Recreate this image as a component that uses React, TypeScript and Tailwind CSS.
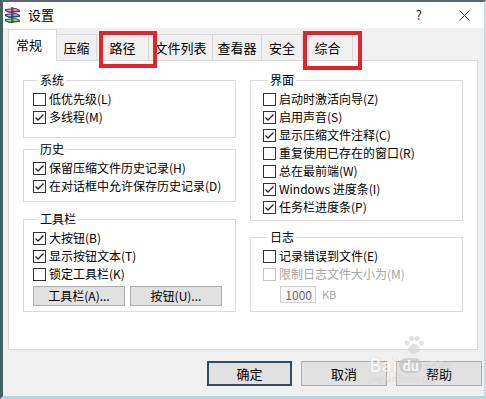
import React from "react";

type Row = { label: string; checked?: boolean; disabled?: boolean };

const systemRows: Row[] = [
  { label: "低优先级(L)" },
  { label: "多线程(M)", checked: true },
];

const historyRows: Row[] = [
  { label: "保留压缩文件历史记录(H)", checked: true },
  { label: "在对话框中允许保存历史记录(D)", checked: true },
];

const toolbarRows: Row[] = [
  { label: "大按钮(B)", checked: true },
  { label: "显示按钮文本(T)", checked: true },
  { label: "锁定工具栏(K)" },
];

const uiRows: Row[] = [
  { label: "启动时激活向导(Z)" },
  { label: "启用声音(S)", checked: true },
  { label: "显示压缩文件注释(C)", checked: true },
  { label: "重复使用已存在的窗口(R)" },
  { label: "总在最前端(W)" },
  { label: "Windows 进度条(I)", checked: true },
  { label: "任务栏进度条(P)", checked: true },
];

const tabs = [
  { label: "压缩", w: "w-[40px]" },
  { label: "路径", w: "w-[52px]" },
  { label: "文件列表", w: "w-[64px]" },
  { label: "查看器", w: "w-[49px]" },
  { label: "安全", w: "w-[41px]" },
  { label: "综合", w: "w-[50px]" },
];

function CheckRow({ label, checked, disabled }: Row) {
  return (
    <div className="flex items-center h-[18px] gap-[3px]">
      <span
        className={`w-[13px] h-[13px] shrink-0 border bg-white flex items-center justify-center ${
          disabled ? "border-[#c4c4c4]" : "border-[#333]"
        }`}
      >
        {checked && (
          <svg width="11" height="11" viewBox="0 0 11 11">
            <polyline points="1.5,5.5 4,8 9.5,2.5" fill="none" stroke="#222" strokeWidth="1.3" />
          </svg>
        )}
      </span>
      <span className={`whitespace-nowrap ${disabled ? "text-[#a6a6a6]" : "text-black"}`}>{label}</span>
    </div>
  );
}

function Group({
  title,
  className,
  children,
}: {
  title: string;
  className: string;
  children: React.ReactNode;
}) {
  return (
    <fieldset className={`border border-[#dcdcdc] w-[213px] ${className}`}>
      <legend className="ml-[5px] px-[2px] leading-[14px]">{title}</legend>
      {children}
    </fieldset>
  );
}

// winrar-style stack of books
function WinRarIcon() {
  return (
    <svg width="17" height="16" viewBox="0 0 17 16">
      <path d="M1 2 L12 1 L16 3 L16 5 L5 6 L1 4 Z" fill="#8a2466" />
      <path d="M2 3 L12 2 L15 3.5 L5 4.5 Z" fill="#e2a3c8" />
      <path d="M1 7 L12 6 L16 8 L16 10 L5 11 L1 9 Z" fill="#27407e" />
      <path d="M2 8 L12 7 L15 8.5 L5 9.5 Z" fill="#9db4e2" />
      <path d="M1 12 L12 11 L16 13 L16 15 L5 16 L1 14 Z" fill="#2b6b3a" />
      <path d="M2 13 L12 12 L15 13.5 L5 14.5 Z" fill="#9fd6a8" />
      <rect x="7" y="0" width="2.5" height="16" fill="#3a3a3a" opacity="0.7" />
    </svg>
  );
}

export default function App() {
  return (
    <div className="relative w-[486px] h-[399px] bg-[#f0f0f0] border-t-2 border-t-[#5b6670] border-l-[3px] border-l-[#44625f] border-r-2 border-r-[#c5dce0] border-b-[3px] border-b-[#b9d4d9] flex flex-col text-[12px] text-black font-['Noto_Sans_CJK_SC','Noto_Sans',sans-serif] overflow-hidden">
      {/* title bar */}
      <div className="h-[26px] bg-white flex items-center pl-[1px] pr-[14px] shrink-0">
        <WinRarIcon />
        <span className="ml-[7px] text-[13px]">设置</span>
        <span className="ml-auto text-[13px] text-[#222]">?</span>
        <svg className="ml-[37px]" width="11" height="11" viewBox="0 0 11 11">
          <path d="M0.5 0.5 L10.5 10.5 M10.5 0.5 L0.5 10.5" stroke="#333" strokeWidth="1" />
        </svg>
      </div>

      {/* tabs + panel */}
      <div className="pl-[5px] pr-[6px] shrink-0">
        <div className="flex items-end h-[32px]">
          <div className="relative z-10 -mb-px w-[49px] h-[32px] bg-white border border-[#d9d9d9] border-b-white flex items-center pl-[7px] text-[13px]">
            常规
          </div>
          {tabs.map((t) => (
            <div
              key={t.label}
              className={`${t.w} h-[26px] bg-[#f0f0f0] border border-[#d9d9d9] border-l-0 border-b-0 flex items-center justify-center text-[13px]`}
            >
              {t.label}
            </div>
          ))}
        </div>
        <div className="h-[290px] bg-white border border-[#d9d9d9] flex gap-[14px] pl-[14px] pt-[12px]">
          {/* left column */}
          <div className="flex flex-col">
            <Group title="系统" className="h-[65px] pl-[9px] pt-[3px]">
              {systemRows.map((r) => (
                <CheckRow key={r.label} {...r} />
              ))}
            </Group>
            <Group title="历史" className="mt-[4px] h-[60px] pl-[9px] pt-[3px]">
              {historyRows.map((r) => (
                <CheckRow key={r.label} {...r} />
              ))}
            </Group>
            <Group title="工具栏" className="mt-[10px] h-[100px] pl-[9px] pt-[3px]">
              {toolbarRows.map((r) => (
                <CheckRow key={r.label} {...r} />
              ))}
              <div className="flex gap-[5px] mt-[3px]">
                <button className="w-[92px] h-[20px] bg-[#e1e1e1] border border-[#adadad] flex items-center justify-center">
                  工具栏(A)...
                </button>
                <button className="w-[92px] h-[20px] bg-[#e1e1e1] border border-[#adadad] flex items-center justify-center">
                  按钮(U)...
                </button>
              </div>
            </Group>
          </div>

          {/* right column */}
          <div className="flex flex-col">
            <Group title="界面" className="h-[148px] pl-[12px] pt-[3px]">
              {uiRows.map((r) => (
                <CheckRow key={r.label} {...r} />
              ))}
            </Group>
            <Group title="日志" className="mt-[9px] h-[82px] pl-[12px] pt-[3px]">
              <CheckRow label="记录错误到文件(E)" />
              <CheckRow label="限制日志文件大小为(M)" disabled />
              <div className="flex items-center mt-[3px] ml-[17px] gap-[6px]">
                <div className="w-[36px] h-[17px] border border-[#cfcfcf] bg-[#f7f7f7] flex items-center justify-end pr-[3px] text-[#6d6d6d]">
                  1000
                </div>
                <span className="text-[#a6a6a6] text-[11px]">KB</span>
              </div>
            </Group>
          </div>
        </div>
      </div>

      {/* footer buttons */}
      <div className="flex justify-end gap-[9px] pt-[11px] pr-[2px]">
        <button className="w-[85px] h-[25px] bg-[#e1e1e1] border-2 border-[#2f4f60] flex items-center justify-center text-[13px]">
          确定
        </button>
        <button className="w-[86px] h-[25px] bg-[#e1e1e1] border border-[#adadad] flex items-center justify-center text-[13px]">
          取消
        </button>
        <button className="w-[86px] h-[25px] bg-[#e1e1e1] border border-[#adadad] flex items-center justify-center text-[13px]">
          帮助
        </button>
      </div>

      {/* red annotation boxes */}
      <div className="absolute left-[96px] top-[29px] w-[58px] h-[37px] border-4 border-[#e0262b] pointer-events-none" />
      <div className="absolute left-[300px] top-[29px] w-[59px] h-[39px] border-4 border-[#e0262b] pointer-events-none" />

      {/* baidu watermark */}
      <div className="absolute left-[366px] top-[333px] pointer-events-none opacity-70">
        <svg className="ml-[32px]" width="26" height="20" viewBox="0 0 26 20">
          <ellipse cx="13" cy="14" rx="6" ry="5" fill="#d6d6d6" />
          <circle cx="6" cy="8" r="2.5" fill="#d6d6d6" />
          <circle cx="10.5" cy="3.5" r="2.5" fill="#d6d6d6" />
          <circle cx="16" cy="3.5" r="2.5" fill="#d6d6d6" />
          <circle cx="20.5" cy="8" r="2.5" fill="#d6d6d6" />
        </svg>
        <div className="flex items-end gap-[2px]">
          <span className="text-[18px] font-bold text-white leading-none [text-shadow:0_0_1px_#9a9a9a]">Bai</span>
          <span className="text-[13px] font-bold text-white bg-[#c4c4c4] rounded-full px-[3px] leading-[15px]">du</span>
          <span className="text-[14px] text-[#d2d2d2] leading-none">经验</span>
        </div>
        <span className="block text-[8px] text-[#d6d6d6] leading-none mt-[2px]">jingyan.baidu.com</span>
      </div>
    </div>
  );
}
